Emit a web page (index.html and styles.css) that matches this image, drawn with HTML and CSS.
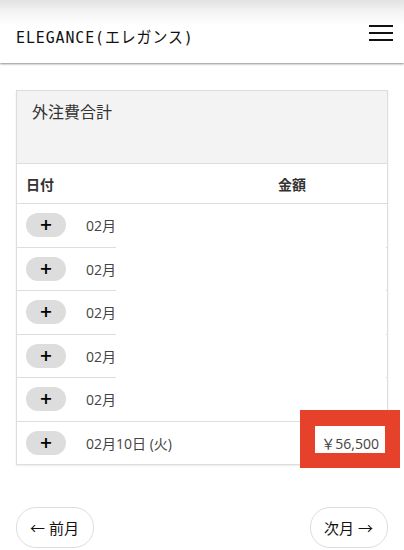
FILE: index.html
```html
<!DOCTYPE html>
<html lang="ja">
<head>
  <meta charset="UTF-8" />
  <title>外注費合計</title>
  <link rel="stylesheet" href="styles.css">
</head>
<body>

  <header class="topbar">
    <div class="brand">ELEGANCE(エレガンス)</div>
    <button class="menu" aria-label="menu">
      <span></span><span></span><span></span>
    </button>
  </header>

  <main class="page">
    <section class="card">
      <div class="card-head">外注費合計</div>

      <table class="list">
        <thead>
          <tr><th class="col-date">日付</th><th class="col-amount">金額</th></tr>
        </thead>
        <tbody>
          <tr><td><span class="plus">+</span><span class="date">02月</span></td><td></td></tr>
          <tr><td><span class="plus">+</span><span class="date">02月</span></td><td></td></tr>
          <tr><td><span class="plus">+</span><span class="date">02月</span></td><td></td></tr>
          <tr><td><span class="plus">+</span><span class="date">02月</span></td><td></td></tr>
          <tr><td><span class="plus">+</span><span class="date">02月</span></td><td></td></tr>
          <tr><td><span class="plus">+</span><span class="date">02月10日 (火)</span></td><td class="amount">￥56,500</td></tr>
        </tbody>
      </table>

      <!-- blanked area of the capture -->
      <div class="blank"></div>
    </section>

    <nav class="pager">
      <a class="pill" href="#">← 前月</a>
      <a class="pill" href="#">次月 →</a>
    </nav>
  </main>

  <!-- annotation frame -->
  <div class="mark"></div>

</body>
</html>
```

FILE: styles.css
```css
body {
  margin: 0;
  font-family: "Open Sans", "Noto Sans CJK JP", sans-serif;
  color: #333;
  background: #fff;
  position: relative;
  height: 550px;
  overflow: hidden;
}
.topbar {
  height: 63px;
  display: flex;
  align-items: center;
  justify-content: space-between;
  padding: 0 11px 0 16px;
  background: linear-gradient(#e2e2e2, #f4f4f4 12px, #fff 26px);
  box-shadow: 0 1px 2px rgba(0, 0, 0, 0.45);
  position: relative;
}
.brand {
  font-family: "DejaVu Sans Mono", "Noto Sans CJK JP", monospace;
  font-size: 16px;
  letter-spacing: 1px;
  color: #111;
  margin-top: 9px;
  transform: scaleX(0.93);
  transform-origin: left;
}
.menu {
  border: 0;
  background: none;
  padding: 0;
  width: 24px;
  display: flex;
  flex-direction: column;
  gap: 4.5px;
  margin-top: 3px;
}
.menu span {
  display: block;
  height: 2.5px;
  background: #111;
}
.page {
  padding: 27px 16px 0;
}
.card {
  position: relative;
  border: 1px solid #ddd;
  box-shadow: 0 1px 2px rgba(0, 0, 0, 0.08);
}
.card-head {
  height: 73px;
  box-sizing: border-box;
  padding: 8px 15px;
  background: #f3f3f3;
  font-size: 16px;
  color: #333;
  border-bottom: 1px solid #ddd;
}
.list {
  width: 100%;
  border-collapse: collapse;
}
.list th {
  height: 39px;
  text-align: left;
  font-size: 14px;
  font-weight: bold;
  color: #333;
  padding: 0 0 0 9px;
  border-bottom: 1px solid #ddd;
}
.list th.col-amount {
  width: 109px;
  padding-left: 0;
}
.list td {
  height: 42.5px;
  padding: 0 0 0 9px;
  border-top: 1px solid #ddd;
  font-size: 14px;
}
.list tbody tr:first-child td {
  border-top: 0;
}
.plus {
  display: inline-block;
  width: 40px;
  height: 24px;
  line-height: 24px;
  border-radius: 12px;
  background: #ddd;
  text-align: center;
  font-family: "DejaVu Sans", sans-serif;
  font-weight: 900;
  font-size: 16px;
  color: #000;
  vertical-align: middle;
}
.date {
  margin-left: 20px;
  vertical-align: middle;
  color: #444;
}
.list td.amount {
  text-align: right;
  padding: 0 8px 0 0;
  color: #444;
}
.blank {
  position: absolute;
  left: 99px;
  top: 114px;
  width: 270px;
  height: 214px;
  background: #fff;
}
.pager {
  display: flex;
  justify-content: space-between;
  margin-top: 42px;
}
.pill {
  display: inline-flex;
  align-items: center;
  height: 39px;
  padding: 0 14px 0 13px;
  border: 1px solid #ddd;
  border-radius: 20px;
  color: #111;
  text-decoration: none;
  font-size: 15px;
}
.mark {
  position: absolute;
  left: 300px;
  top: 410px;
  width: 70px;
  height: 27px;
  border: 15px solid #e5412b;
  border-top-width: 16px;
}
```
